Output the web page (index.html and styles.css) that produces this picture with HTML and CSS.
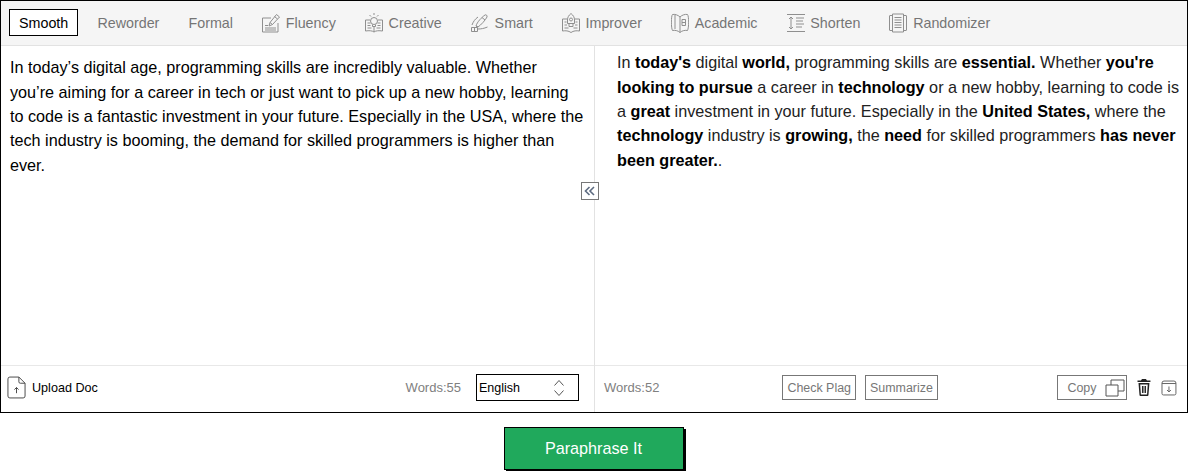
FILE: index.html
```html
<!DOCTYPE html>
<html lang="en">
<head>
<meta charset="utf-8">
<title>Paraphrase</title>
<link rel="stylesheet" href="styles.css">
</head>
<body>
<main class="tool">
  <nav class="modes">
    <span class="mode active">Smooth</span>
    <span class="mode">Reworder</span>
    <span class="mode">Formal</span>
    <span class="mode">
      <svg class="mode-icon" viewBox="0 0 18 20"><path d="M9 5H.5V19H16V10"/><path d="M7 13l1-3.500L14.500 1.500l3 2.500-7 7.500z"/><path d="M12.500 3.500l3 2.500M8 9.500l2.500 2"/><path d="M3 15h11M3 17h11M3 12.500h3"/></svg>
      Fluency
    </span>
    <span class="mode">
      <svg class="mode-icon" viewBox="0 0 18 20"><path d="M9 19c-2-1.500-5-1.500-8.500-1V7H5M9 19c2-1.500 5-1.500 8.500-1V7H13M9 13v6"/><circle cx="9" cy="8" r="3.500"/><path d="M9 0v2M4.500 2L6 3.500M13.500 2L12 3.500M7.500 11.500v2h3v-2"/><path d="M2.500 10h3M2.500 12.500h3M2.500 15h4M12.500 10h3M12.500 12.500h3M11.500 15h4"/></svg>
      Creative
    </span>
    <span class="mode">
      <svg class="mode-icon" viewBox="0 0 18 20"><path d="M5 13C6 9 11 4 14 2c1-.7 2.500.5 2 2-1.500 3-6 8-9 10z"/><path d="M11 4.500l3 2.500M1 12c1-3 3-6 6-8M5 13l2 1"/><path d="M.5 14.500h6v4h-6zM7 16c3 0 6-.5 9.500-2M3.500 15v3"/></svg>
      Smart
    </span>
    <span class="mode">
      <svg class="mode-icon" viewBox="0 0 18 20"><path d="M9 .5c2.500 2 3.500 4 3.500 6.500v3.500h-7V7C5.500 4.500 6.500 2.500 9 .5z"/><circle cx="9" cy="6.500" r="1.500"/><path d="M5.500 6H.5v12c3-.5 6-.3 8.500 1.500 2.500-1.800 5.500-2 8.500-1.500V6h-5"/><path d="M7 10.500v3h4v-3M2.500 9h2M13.500 9h2M2.500 12h2.500M13 12h2.500M2.500 15h4M11.500 15h4"/></svg>
      Improver
    </span>
    <span class="mode">
      <svg class="mode-icon" viewBox="0 0 18 20"><path d="M9 4C7 2 4 1 1.500 1.500 0 3 0 15 1.500 17.500c2-.5 5.500 0 7.500 2 2-2 5.500-2.500 7.500-2 1.500-2.500 1.500-14.500 0-16C14 1 11 2 9 4z"/><path d="M9 4v15.500M4 1.500v14.500"/><path d="M11 6.500h3.500M11 9.500h3.500M11 12.500h3.500"/><path d="M11 6.500v6M14.500 6.500v6"/></svg>
      Academic
    </span>
    <span class="mode">
      <svg class="mode-icon" viewBox="0 0 18 20"><path d="M0 1.500h18M0 18.500h18M4 4v12M2 6l2-2 2 2M2 14l2 2 2-2"/><path d="M9 5h8M9 8h7M9 11h8M9 14h6"/></svg>
      Shorten
    </span>
    <span class="mode">
      <svg class="mode-icon" viewBox="0 0 18 20"><path d="M3.500 1h11v18h-11z"/><path d="M3.500 2.500H1a.5.5 0 0 0-.5.5v14a.5.5 0 0 0 .5.5h2.500M14.500 2.500H17a.5.5 0 0 1 .5.5v14a.5.5 0 0 1-.5.5h-2.500"/><path d="M5.500 4.500h7M5.500 7h7M5.500 9.500h7M5.500 12h7M5.500 14.500h7"/></svg>
      Randomizer
    </span>
  </nav>

  <div class="panels">
    <section class="panel panel-source">
      <p class="text text-source">In today’s digital age, programming skills are incredibly valuable. Whether<br>you’re aiming for a career in tech or just want to pick up a new hobby, learning<br>to code is a fantastic investment in your future. Especially in the USA, where the<br>tech industry is booming, the demand for skilled programmers is higher than<br>ever.</p>
      <footer class="bar">
        <span class="upload">
          <svg class="upload-icon" viewBox="0 0 20 24"><path d="M12.500 1H3a2 2 0 0 0-2 2v18a2 2 0 0 0 2 2h14a2 2 0 0 0 2-2V7.500zM12.500 1v5a1.500 1.500 0 0 0 1.500 1.500h5"/><path d="M10 18v-6M7.800 14.200L10 12l2.200 2.200"/></svg>
          Upload Doc
        </span>
        <span class="words words-source">Words:55</span>
        <span class="lang">English
          <svg class="lang-icon" viewBox="0 0 12 18"><path d="M1.500 6.500L6 1.500l4.500 5M1.500 11.500l4.500 5 4.500-5"/></svg>
        </span>
      </footer>
    </section>

    <button class="collapse" type="button" aria-label="Collapse">
      <svg viewBox="0 0 12 10"><path d="M5.500 1L1.500 5l4 4M10 1L6 5l4 4"/></svg>
    </button>

    <section class="panel panel-result">
      <p class="text text-result">In <b>today's</b> digital <b>world,</b> programming skills are <b>essential.</b> Whether <b>you're looking to pursue</b> a career in <b>technology</b> or a new hobby, learning to code is a <b>great</b> investment in your future. Especially in the <b>United States,</b> where the <b>technology</b> industry is <b>growing,</b> the <b>need</b> for skilled programmers <b>has never been greater.</b>.</p>
      <footer class="bar">
        <span class="words">Words:52</span>
        <span class="actions">
          <span class="outline">Check Plag</span>
          <span class="outline">Summarize</span>
        </span>
        <span class="outline copy">Copy
          <svg class="copy-icon" viewBox="0 0 20 18"><path d="M1 6h12v11H1z"/><path d="M6 6V1h13v11h-6"/></svg>
        </span>
        <svg class="trash-icon" viewBox="0 0 14 17"><path class="solid" d="M5 0h4l1 1.500h3.500V3H.5V1.500H4z"/><path class="solid" d="M1.500 4h11l-1 12a1 1 0 0 1-1 1h-7a1 1 0 0 1-1-1zM3.200 5.500l.7 10h6.200l.7-10z"/><path d="M5.500 7v7M7 7v7M8.500 7v7"/></svg>
        <svg class="save-icon" viewBox="0 0 16 16"><path d="M1 3a2 2 0 0 1 2-2h10a2 2 0 0 1 2 2v10.500a1.500 1.500 0 0 1-1.500 1.500h-11A1.500 1.500 0 0 1 1 13.500zM1 3.500h14"/><path d="M8 6.500v5.500M6 10l2 2 2-2"/></svg>
      </footer>
    </section>
  </div>
</main>

<div class="submit-row">
  <button class="submit" type="button">Paraphrase It</button>
</div>
</body>
</html>
```

FILE: styles.css
```css
* {
  box-sizing: border-box;
}

html,
body {
  margin: 0;
  padding: 0;
  height: 471px;
  overflow: hidden;
  background: #fff;
}

body {
  font-family: "Liberation Sans", Arial, sans-serif;
  color: #000;
}

.tool {
  width: 1188px;
  height: 413px;
  border: 1px solid #000;
  display: flex;
  flex-direction: column;
}

.modes {
  height: 45px;
  flex: none;
  display: flex;
  align-items: center;
  gap: 9.100px;
  padding: 0 0 1px 8px;
  background: #f5f5f5;
  border-bottom: 1px solid #e2e2e2;
}

.mode {
  display: flex;
  align-items: center;
  gap: 5.700px;
  height: 27px;
  padding: 0 9px;
  border: 1px solid transparent;
  font-size: 14.300px;
  color: #757575;
  white-space: nowrap;
}

.mode.active {
  border-color: #000;
  background: #fff;
  color: #000;
}

.mode-icon {
  width: 18px;
  height: 20px;
  fill: none;
  stroke: #8f8f8f;
  stroke-width: 1;
}

.panels {
  flex: 1;
  display: flex;
  position: relative;
  min-height: 0;
}

.panel {
  display: flex;
  flex-direction: column;
  min-width: 0;
}

.panel-source {
  width: 594px;
  flex: none;
  border-right: 1px solid #e2e2e2;
}

.panel-result {
  flex: 1;
}

.text {
  flex: 1;
  margin: 0;
  font-size: 16.200px;
  line-height: 24.400px;
}

.text-source {
  padding: 9.200px 4px 0 9px;
}

.text-result {
  padding: 4.200px 5px 0 22px;
  color: #222;
}

.text-result b {
  color: #000;
}

.bar {
  height: 47px;
  flex: none;
  display: flex;
  align-items: center;
  padding-bottom: 3px;
  border-top: 1px solid #e8e8e8;
  font-size: 13px;
}

.panel-source .bar {
  padding-left: 6px;
  padding-right: 15px;
}

.panel-result .bar {
  padding-left: 9px;
  padding-right: 10px;
}

.upload {
  display: flex;
  align-items: center;
  gap: 6px;
  font-size: 12.600px;
}

.upload-icon {
  width: 19px;
  height: 23px;
  fill: none;
  stroke: #444;
  stroke-width: 1;
}

.words {
  color: #808080;
}

.words-source {
  margin-left: auto;
  margin-right: 15px;
}

.lang {
  width: 103px;
  height: 27px;
  padding: 0 13px 0 2px;
  display: flex;
  align-items: center;
  justify-content: space-between;
  border: 1px solid #000;
  font-size: 12.500px;
}

.lang-icon {
  width: 12px;
  height: 18px;
  fill: none;
  stroke: #555;
  stroke-width: 1;
}

.collapse {
  position: absolute;
  left: 580px;
  top: 136px;
  width: 18px;
  height: 18px;
  padding: 2px;
  display: flex;
  align-items: center;
  justify-content: center;
  background: #fff;
  border: 1px solid #777;
}

.collapse svg {
  width: 12px;
  height: 10px;
  fill: none;
  stroke: #5d6b80;
  stroke-width: 1.600;
}

.actions {
  display: flex;
  gap: 9px;
  margin-left: 123px;
}

.outline {
  height: 25px;
  display: flex;
  align-items: center;
  padding: 0 4px;
  border: 1px solid #777;
  color: #777;
  font-size: 12.450px;
  white-space: nowrap;
}

.copy {
  width: 70px;
  margin-left: 119.500px;
  padding: 0 1px 0 9px;
  justify-content: space-between;
}

.copy-icon {
  width: 20px;
  height: 18px;
  fill: none;
  stroke: #555;
  stroke-width: 1;
}

.trash-icon {
  width: 14px;
  height: 17px;
  margin-left: 10px;
  fill: none;
  stroke: #222;
  stroke-width: 1;
}

.trash-icon .solid {
  fill: #222;
  stroke: none;
  fill-rule: evenodd;
}

.save-icon {
  width: 16px;
  height: 16px;
  margin-left: 10px;
  fill: none;
  stroke: #666;
  stroke-width: 1;
}

.submit-row {
  display: flex;
  padding: 14px 0 0 504px;
}

.submit {
  width: 180px;
  height: 43px;
  padding: 0 1px 0 0;
  background: #20a95c;
  border: 1px solid #000;
  box-shadow: 2px 2px 0 #000;
  color: #fff;
  font-family: inherit;
  font-size: 16.200px;
}
```
